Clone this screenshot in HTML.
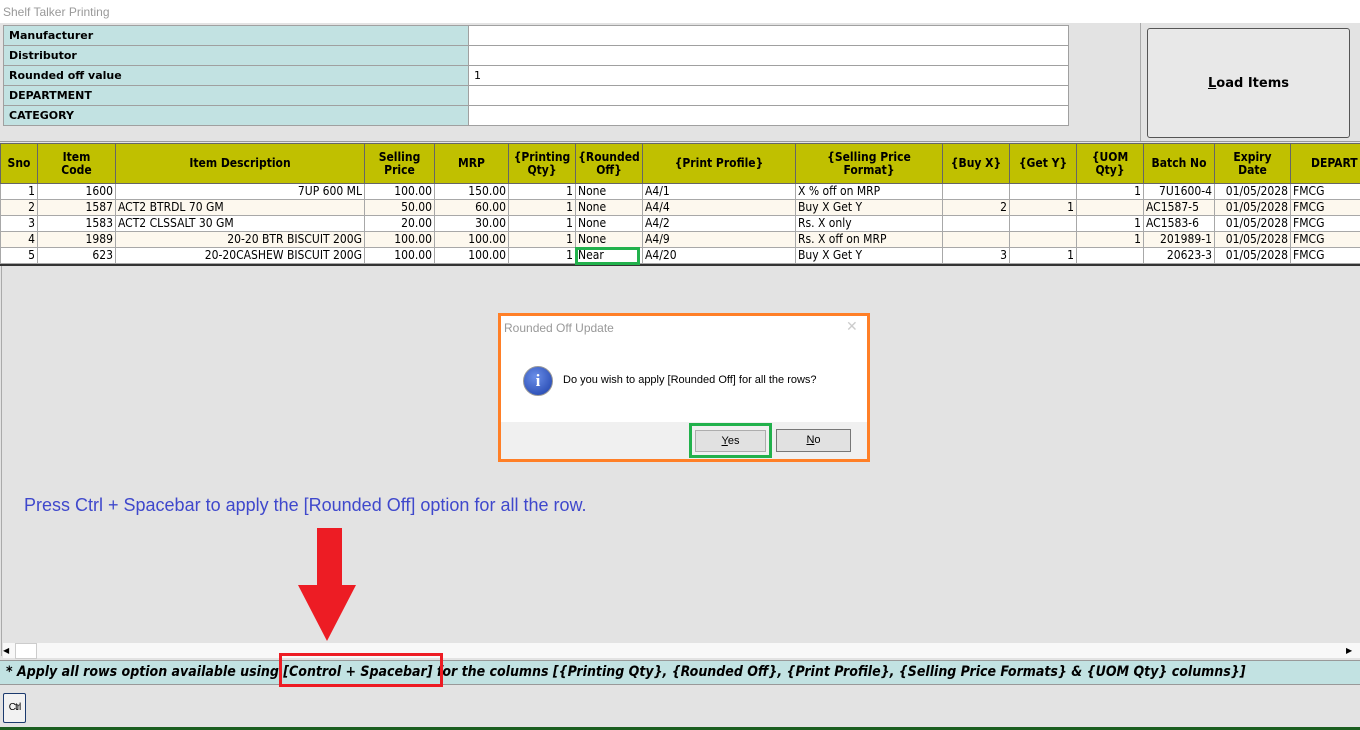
<html><head><style>
body{margin:0;width:1360px;height:730px;background:#e3e3e3;position:relative;overflow:hidden;font-family:"DejaVu Sans","Liberation Sans",sans-serif;}
.a{position:absolute}
table{border-collapse:collapse;table-layout:fixed}
.form td{height:20px;border:1px solid #a0a0a0;font-size:11px;padding:0 0 0 5px;font-weight:bold}
.form td.v{background:#fff;font-weight:normal}
.form td.l{background:#c2e2e2}
.g td{border:1px solid #a8a8a8;font-size:12px;height:16px;padding:0 2px;white-space:nowrap;overflow:hidden;font-family:"DejaVu Sans Condensed","DejaVu Sans",sans-serif;line-height:15px}
.g th{background:#c0c000;border:1px solid #666;font-size:12px;height:40px;padding:0;font-family:"DejaVu Sans Condensed","DejaVu Sans",sans-serif;line-height:13px}
.g tr.o td{background:#fdf8ee}
.g tr.e td{background:#fff}
.r{text-align:right}
</style></head><body>
<div class="a" style="left:0;top:0;width:1360px;height:23px;background:#fff;font-size:12px;color:#999;font-family:'Liberation Sans',sans-serif;line-height:24px;padding-left:3px">Shelf Talker Printing</div>
<table class="form a" style="left:3px;top:25px;width:1066px">
<col style="width:465px"><col>
<tr><td class="l">Manufacturer</td><td class="v"></td></tr>
<tr><td class="l">Distributor</td><td class="v"></td></tr>
<tr><td class="l">Rounded off value</td><td class="v">1</td></tr>
<tr><td class="l">DEPARTMENT</td><td class="v"></td></tr>
<tr><td class="l">CATEGORY</td><td class="v"></td></tr>
</table>
<div class="a" style="left:1140px;top:23px;width:1px;height:118px;background:#aaa"></div>
<div class="a" style="left:1147px;top:28px;width:201px;height:108px;background:#e8e8e8;border:1px solid #555;border-radius:3px;font-size:13px;font-weight:bold;text-align:center;line-height:110px"><u>L</u>oad Items</div>
<div class="a" style="left:0;top:141px;width:1360px;height:1px;background:#999"></div>
<table class="g a" style="left:0;top:143px;width:1390px">
<col style="width:37px"><col style="width:78px"><col style="width:249px"><col style="width:70px"><col style="width:74px"><col style="width:67px"><col style="width:67px"><col style="width:153px"><col style="width:147px"><col style="width:67px"><col style="width:67px"><col style="width:67px"><col style="width:71px"><col style="width:76px"><col style="width:100px">
<tr><th>Sno</th><th>Item<br>Code</th><th>Item Description</th><th>Selling<br>Price</th><th>MRP</th><th>{Printing<br>Qty}</th><th>{Rounded<br>Off}</th><th>{Print Profile}</th><th>{Selling Price<br>Format}</th><th>{Buy X}</th><th>{Get Y}</th><th>{UOM<br>Qty}</th><th>Batch No</th><th>Expiry<br>Date</th><th style="text-align:left;padding-left:20px">DEPART</th></tr>
<tr class="e"><td class="r">1</td><td class="r">1600</td><td class="r">7UP 600 ML</td><td class="r">100.00</td><td class="r">150.00</td><td class="r">1</td><td>None</td><td>A4/1</td><td>X % off on MRP</td><td></td><td></td><td class="r">1</td><td class="r">7U1600-4</td><td class="r">01/05/2028</td><td>FMCG</td></tr>
<tr class="o"><td class="r">2</td><td class="r">1587</td><td>ACT2 BTRDL 70 GM</td><td class="r">50.00</td><td class="r">60.00</td><td class="r">1</td><td>None</td><td>A4/4</td><td>Buy X Get Y</td><td class="r">2</td><td class="r">1</td><td></td><td>AC1587-5</td><td class="r">01/05/2028</td><td>FMCG</td></tr>
<tr class="e"><td class="r">3</td><td class="r">1583</td><td>ACT2 CLSSALT 30 GM</td><td class="r">20.00</td><td class="r">30.00</td><td class="r">1</td><td>None</td><td>A4/2</td><td>Rs. X only</td><td></td><td></td><td class="r">1</td><td>AC1583-6</td><td class="r">01/05/2028</td><td>FMCG</td></tr>
<tr class="o"><td class="r">4</td><td class="r">1989</td><td class="r">20-20 BTR BISCUIT 200G</td><td class="r">100.00</td><td class="r">100.00</td><td class="r">1</td><td>None</td><td>A4/9</td><td>Rs. X off on MRP</td><td></td><td></td><td class="r">1</td><td class="r">201989-1</td><td class="r">01/05/2028</td><td>FMCG</td></tr>
<tr class="e"><td class="r">5</td><td class="r">623</td><td class="r">20-20CASHEW BISCUIT 200G</td><td class="r">100.00</td><td class="r">100.00</td><td class="r">1</td><td>Near</td><td>A4/20</td><td>Buy X Get Y</td><td class="r">3</td><td class="r">1</td><td></td><td class="r">20623-3</td><td class="r">01/05/2028</td><td>FMCG</td></tr>
</table>
<div class="a" style="left:0;top:264px;width:1360px;height:2px;background:#333"></div>
<div class="a" style="left:575px;top:247px;width:65px;height:18px;border:3px solid #22b14c;box-sizing:border-box"></div>
<div class="a" style="left:1px;top:266px;width:1px;height:390px;background:#aaa"></div>
<div class="a" style="left:498px;top:313px;width:372px;height:149px;background:#f0f0f0;border:3px solid #ff7f27;box-sizing:border-box">
<div style="height:106px;background:#fff;position:relative">
<div class="a" style="left:3px;top:5px;font-size:12px;color:#999;font-family:'Liberation Sans',sans-serif">Rounded Off Update</div>
<div class="a" style="left:345px;top:3px;font-size:14px;color:#ccc">✕</div>
<div class="a" style="left:22px;top:50px;width:28px;height:28px;border-radius:50%;background:radial-gradient(circle at 40% 35%,#6a8ee8,#1b3ea8);border:1px solid #999;color:#fff;font:bold 17px 'Liberation Serif',serif;text-align:center;line-height:28px">i</div>
<div class="a" style="left:62px;top:58px;font-size:11px;font-family:'Liberation Sans',sans-serif">Do you wish to apply [Rounded Off] for all the rows?</div>
</div>
<div class="a" style="left:188px;top:107px;width:83px;height:35px;border:3px solid #22b14c;box-sizing:border-box"></div>
<div class="a" style="left:194px;top:114px;width:71px;height:22px;background:#e1e1e1;border:1px solid #adadad;box-sizing:border-box;font-size:11px;text-align:center;line-height:20px;font-family:'Liberation Sans',sans-serif"><u>Y</u>es</div>
<div class="a" style="left:275px;top:113px;width:75px;height:23px;background:#e1e1e1;border:1px solid #777;box-sizing:border-box;font-size:11px;text-align:center;line-height:21px;font-family:'Liberation Sans',sans-serif"><u>N</u>o</div>
</div>
<div class="a" style="left:24px;top:495px;font-size:18px;color:#3f48cc;font-family:'Liberation Sans',sans-serif">Press Ctrl + Spacebar to apply the [Rounded Off] option for all the row.</div>
<div class="a" style="left:317px;top:528px;width:25px;height:58px;background:#ed1c24"></div>
<div class="a" style="left:298px;top:585px;width:0;height:0;border-left:29px solid transparent;border-right:29px solid transparent;border-top:56px solid #ed1c24"></div>
<div class="a" style="left:3px;top:643px;width:1357px;height:15px;background:#f8f8f8"></div>
<div class="a" style="left:3px;top:643px;width:12px;height:15px;font-size:8px;line-height:15px">◀</div>
<div class="a" style="left:15px;top:643px;width:20px;height:14px;background:#fff;border:1px solid #ccc"></div>
<div class="a" style="left:1346px;top:643px;width:12px;height:15px;font-size:8px;line-height:15px">▶</div>
<div class="a" style="left:0;top:660px;width:1360px;height:25px;background:#c2e2e2;border-top:1px solid #999;border-bottom:1px solid #999;font:italic bold 14px 'DejaVu Sans Condensed','DejaVu Sans',sans-serif;line-height:22px;padding-left:6px;box-sizing:border-box;white-space:nowrap">* Apply all rows option available using [Control + Spacebar] for the columns [{Printing Qty}, {Rounded Off}, {Print Profile}, {Selling Price Formats} &amp; {UOM Qty} columns}]</div>
<div class="a" style="left:279px;top:653px;width:164px;height:34px;border:3px solid #ed1c24;box-sizing:border-box"></div>
<div class="a" style="left:3px;top:693px;width:23px;height:30px;background:#f2f2f2;border:1px solid #1b3a6e;border-radius:2px;box-sizing:border-box;font-size:10px;line-height:28px;text-align:center;font-family:'Liberation Sans Narrow','Liberation Sans',sans-serif;letter-spacing:-1px">Ctrl</div>
<div class="a" style="left:0;top:727px;width:1360px;height:3px;background:#1b5e20"></div>
</body></html>
